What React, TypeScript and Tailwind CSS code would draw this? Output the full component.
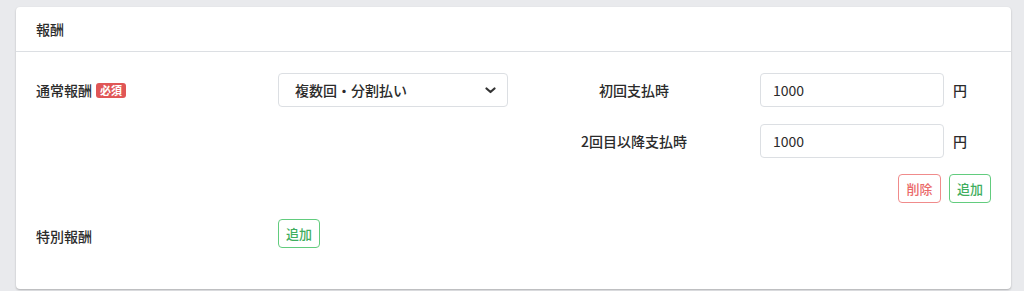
export default function App() {
  return (
    <div className="min-h-[291px] bg-[#e9eaed] pl-4 pr-[13px] pt-[7px] pb-[2px] font-['Noto_Sans_CJK_JP','Noto_Sans',sans-serif] text-[14px] font-medium text-[#2b2b2b]">
      <div className="rounded-[4px] bg-white shadow-[0_1px_2px_rgba(0,0,0,0.25)]">
        <div className="flex h-[45px] items-center border-b border-[#dcdfe3] px-5">
          報酬
        </div>
        <div className="px-5 pt-[21px] pb-[41px]">
          <div className="grid grid-cols-[242px_230px_252px_184px_1fr] items-center">
            <div className="flex items-center">
              <span>通常報酬</span>
              <span className="ml-[4px] rounded-[3px] bg-[#e05656] px-[4px] py-[1px] text-[11px] leading-[13px] font-bold text-white">
                必須
              </span>
            </div>
            <div className="relative">
              <select
                defaultValue="multi"
                className="h-[34px] w-full appearance-none rounded-[4px] border border-[#dcdfe3] bg-white pl-4 pr-8 text-[14px] font-medium text-[#2b2b2b] outline-none"
              >
                <option value="multi">複数回・分割払い</option>
              </select>
              <svg
                className="pointer-events-none absolute right-[12px] top-[14px]"
                width="11"
                height="7"
                viewBox="0 0 11 7"
              >
                <path d="M1.5 1.5L5.5 5L9.5 1.5" fill="none" stroke="#333" strokeWidth="2.2" strokeLinecap="round" strokeLinejoin="round" />
              </svg>
            </div>
            <div className="text-center">初回支払時</div>
            <input
              defaultValue="1000"
              className="h-[34px] w-full rounded-[4px] border border-[#dcdfe3] px-3 text-[14px] font-normal text-[#2b2b2b] outline-none"
            />
            <div className="pl-[9px]">円</div>

            <div className="col-start-3 mt-[17px] text-center">2回目以降支払時</div>
            <input
              defaultValue="1000"
              className="mt-[17px] h-[34px] w-full rounded-[4px] border border-[#dcdfe3] px-3 text-[14px] font-normal text-[#2b2b2b] outline-none"
            />
            <div className="mt-[17px] pl-[9px]">円</div>
          </div>

          <div className="mt-4 flex justify-end gap-2">
            <button className="h-[29px] w-[43px] rounded-[4px] border border-[#f08b8b] text-[13px] text-[#ea6a6a]">
              削除
            </button>
            <button className="h-[29px] w-[42px] rounded-[4px] border border-[#62cc7e] text-[13px] text-[#3fae5e]">
              追加
            </button>
          </div>

          <div className="mt-4 grid grid-cols-[242px_1fr] items-start">
            <div className="pt-[7px]">特別報酬</div>
            <div>
              <button className="h-[29px] w-[42px] rounded-[4px] border border-[#62cc7e] text-[13px] text-[#3fae5e]">
                追加
              </button>
            </div>
          </div>
        </div>
      </div>
    </div>
  );
}
